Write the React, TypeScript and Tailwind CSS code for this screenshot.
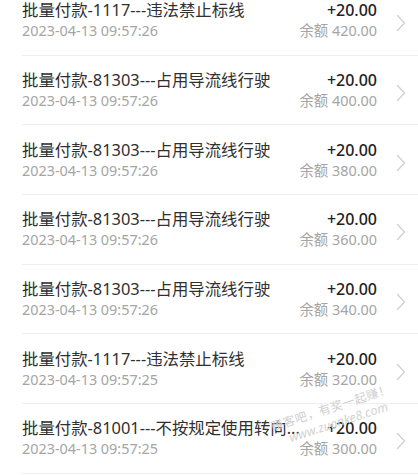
const rows = [
  { title: "批量付款-1117---违法禁止标线", time: "2023-04-13 09:57:26", balance: "420.00" },
  { title: "批量付款-81303---占用导流线行驶", time: "2023-04-13 09:57:26", balance: "400.00" },
  { title: "批量付款-81303---占用导流线行驶", time: "2023-04-13 09:57:26", balance: "380.00" },
  { title: "批量付款-81303---占用导流线行驶", time: "2023-04-13 09:57:26", balance: "360.00" },
  { title: "批量付款-81303---占用导流线行驶", time: "2023-04-13 09:57:26", balance: "340.00" },
  { title: "批量付款-1117---违法禁止标线", time: "2023-04-13 09:57:25", balance: "320.00" },
  { title: "批量付款-81001---不按规定使用转向...", time: "2023-04-13 09:57:25", balance: "300.00" },
];

function Chevron() {
  return (
    <svg width="10" height="18" viewBox="0 0 10 18" fill="none" className="shrink-0">
      <polyline points="1.5,1.5 8.5,9 1.5,16.5" stroke="#d0d0d0" strokeWidth="1.3" strokeLinecap="round" strokeLinejoin="round" />
    </svg>
  );
}

export default function App() {
  return (
    <div
      className="relative w-[418px] h-[475px] overflow-hidden bg-white"
      style={{ fontFamily: '"Noto Sans", "Noto Sans CJK SC", sans-serif' }}
    >
      <div className="mt-[-14px]">
        {rows.map((r, i) => (
          <div key={i} className="ml-[22px] h-[69.67px] border-b border-[#efefef] flex items-center">
            <div className="flex-1 min-w-0 flex items-center gap-[6px]">
              <div className="flex-1 min-w-0">
                <div className="whitespace-nowrap text-[16.4px] leading-[22px] text-[#303030]">{r.title}</div>
                <div className="text-[14.4px] leading-[20px] text-[#a5a5a5]">{r.time}</div>
              </div>
              <div className="shrink-0 text-right">
                <div className="text-[16px] leading-[22px] font-medium text-[#222]">+20.00</div>
                <div className="text-[14.4px] leading-[20px] text-[#a5a5a5]">余额 {r.balance}</div>
              </div>
            </div>
            <div className="ml-[19px] mr-[12px] mt-[6px]">
              <Chevron />
            </div>
          </div>
        ))}
      </div>

      <div className="absolute left-[274px] top-[419px] -rotate-[18deg] origin-left pointer-events-none select-none">
        <div className="text-[12px] leading-[16px] text-[#cfcfcf] tracking-[0.5px] whitespace-nowrap">赚客吧，有奖一起赚！</div>
        <div className="pl-[14px] text-[12.5px] leading-[16px] italic text-[#d2d2d2] whitespace-nowrap">www.zuanke8.com</div>
      </div>
    </div>
  );
}
